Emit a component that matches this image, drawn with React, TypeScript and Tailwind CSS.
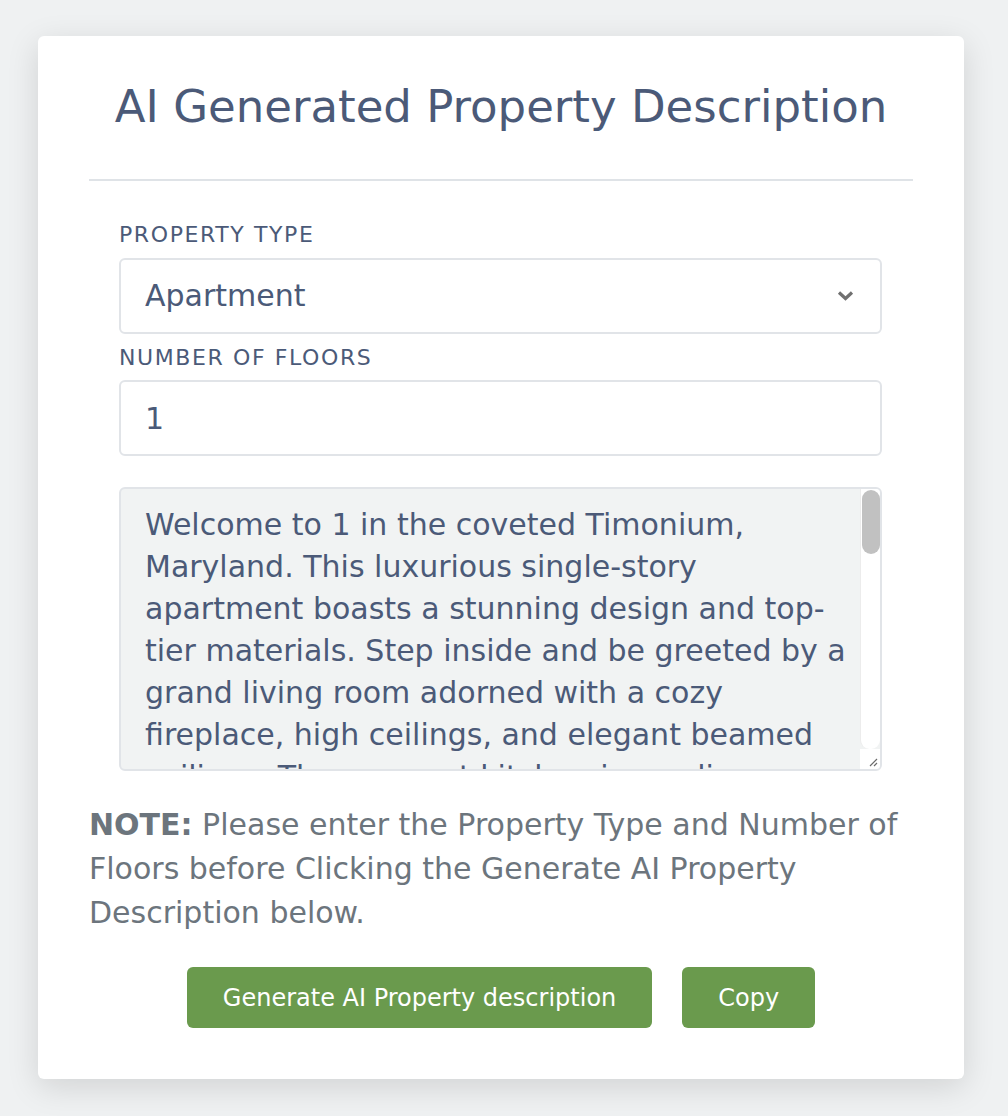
import { useState } from "react";

const description =
  "Welcome to 1 in the coveted Timonium, Maryland. This luxurious single-story apartment boasts a stunning design and top-tier materials. Step inside and be greeted by a grand living room adorned with a cozy fireplace, high ceilings, and elegant beamed ceilings. The gourmet kitchen is a culinary dream, featuring custom cabinetry, granite countertops, and stainless steel appliances. The spacious primary suite offers a peaceful retreat with a walk-in closet and a spa-like bathroom with a soaking tub and a separate glass shower. Large windows fill every room with natural light, while hardwood floors flow throughout the home. Enjoy your morning coffee on the private balcony overlooking the beautifully landscaped grounds. Residents enjoy access to a fitness center, a sparkling pool, and secure parking. Conveniently located near shopping, dining, parks, and major commuter routes, this apartment offers the perfect blend of comfort and convenience. Don't miss the opportunity to make it yours!";

export default function App() {
  const [propertyType, setPropertyType] = useState("Apartment");
  const [floors, setFloors] = useState("1");

  return (
    <div className="min-h-[1116px] bg-[#eff1f2] pt-[36px] pl-[38px] font-['DejaVu_Sans',sans-serif]">
      <div className="w-[926px] h-[1043px] bg-white rounded-md shadow-[0_8px_32px_rgba(0,0,0,0.13)] pt-[44px] px-[51px]">
        <h1 className="text-center text-[45px] leading-[54px] text-[#4b5a78]">
          AI Generated Property Description
        </h1>
        <div className="mt-[45px] h-[2px] bg-[#dfe3e7]" />

        <div className="pl-[30px] pr-[31px]">
          <label className="block mt-[41px] mb-[10px] text-[22px] leading-[26px] tracking-[1.6px] text-[#4b5a78]">
            PROPERTY TYPE
          </label>
          <div className="relative">
            <select
              value={propertyType}
              onChange={(e) => setPropertyType(e.target.value)}
              className="w-full h-[76px] appearance-none border-2 border-[#e1e4e8] rounded-md bg-white pl-[24px] pr-12 text-[30px] leading-[36px] text-[#4b5a78] outline-none"
            >
              <option>Apartment</option>
              <option>House</option>
              <option>Condo</option>
              <option>Townhouse</option>
            </select>
            <svg
              className="absolute right-[28px] top-[32px] pointer-events-none"
              width="17"
              height="11"
              viewBox="0 0 17 11"
              fill="none"
            >
              <path d="M2 2.5l6.5 6 6.5-6" stroke="#707070" strokeWidth="3.2" />
            </svg>
          </div>

          <label className="block mt-[11px] mb-[9px] text-[22px] leading-[26px] tracking-[1.6px] text-[#4b5a78]">
            NUMBER OF FLOORS
          </label>
          <input
            type="text"
            value={floors}
            onChange={(e) => setFloors(e.target.value)}
            className="w-full h-[76px] border-2 border-[#e1e4e8] rounded-md bg-white px-[24px] text-[30px] leading-[36px] text-[#4b5a78] outline-none"
          />

          <div className="relative mt-[31px]">
            <textarea
              readOnly
              value={description}
              className="block w-full h-[284px] resize-none overflow-hidden border-2 border-[#e1e4e8] rounded-md bg-[#f1f3f3] pl-[24px] pr-[34px] pt-[15px] text-[30px] leading-[42px] text-[#4b5a78] outline-none"
            />
            {/* scrollbar */}
            <div className="absolute top-[2px] right-[2px] w-[20px] h-[260px] bg-white rounded-tr-[4px] rounded-b-[9px] border-l border-[#ececec]">
              <div className="mx-auto mt-[1px] w-[18px] h-[64px] rounded-full bg-[#c1c1c1]" />
            </div>
            <div className="absolute bottom-[2px] right-[2px] w-[20px] h-[20px] bg-white rounded-br-[4px]">
              <svg width="20" height="20" viewBox="0 0 20 20" fill="none">
                <path d="M10 17l7-7M14 17l3-3" stroke="#6b6b6b" strokeWidth="1.2" />
              </svg>
            </div>
          </div>
        </div>

        <p className="mt-[32px] text-[30px] leading-[44px] text-[#6c757d]">
          <span className="font-bold">NOTE:</span> Please enter the Property Type
          and Number of Floors before Clicking the Generate AI Property
          Description below.
        </p>

        <div className="mt-[32px] flex justify-center gap-[30px]">
          <button className="h-[61px] px-[36px] rounded-md bg-[#6a9a4d] text-white text-[24px]">
            Generate AI Property description
          </button>
          <button className="h-[61px] px-[36px] rounded-md bg-[#6a9a4d] text-white text-[24px]">
            Copy
          </button>
        </div>
      </div>
    </div>
  );
}
